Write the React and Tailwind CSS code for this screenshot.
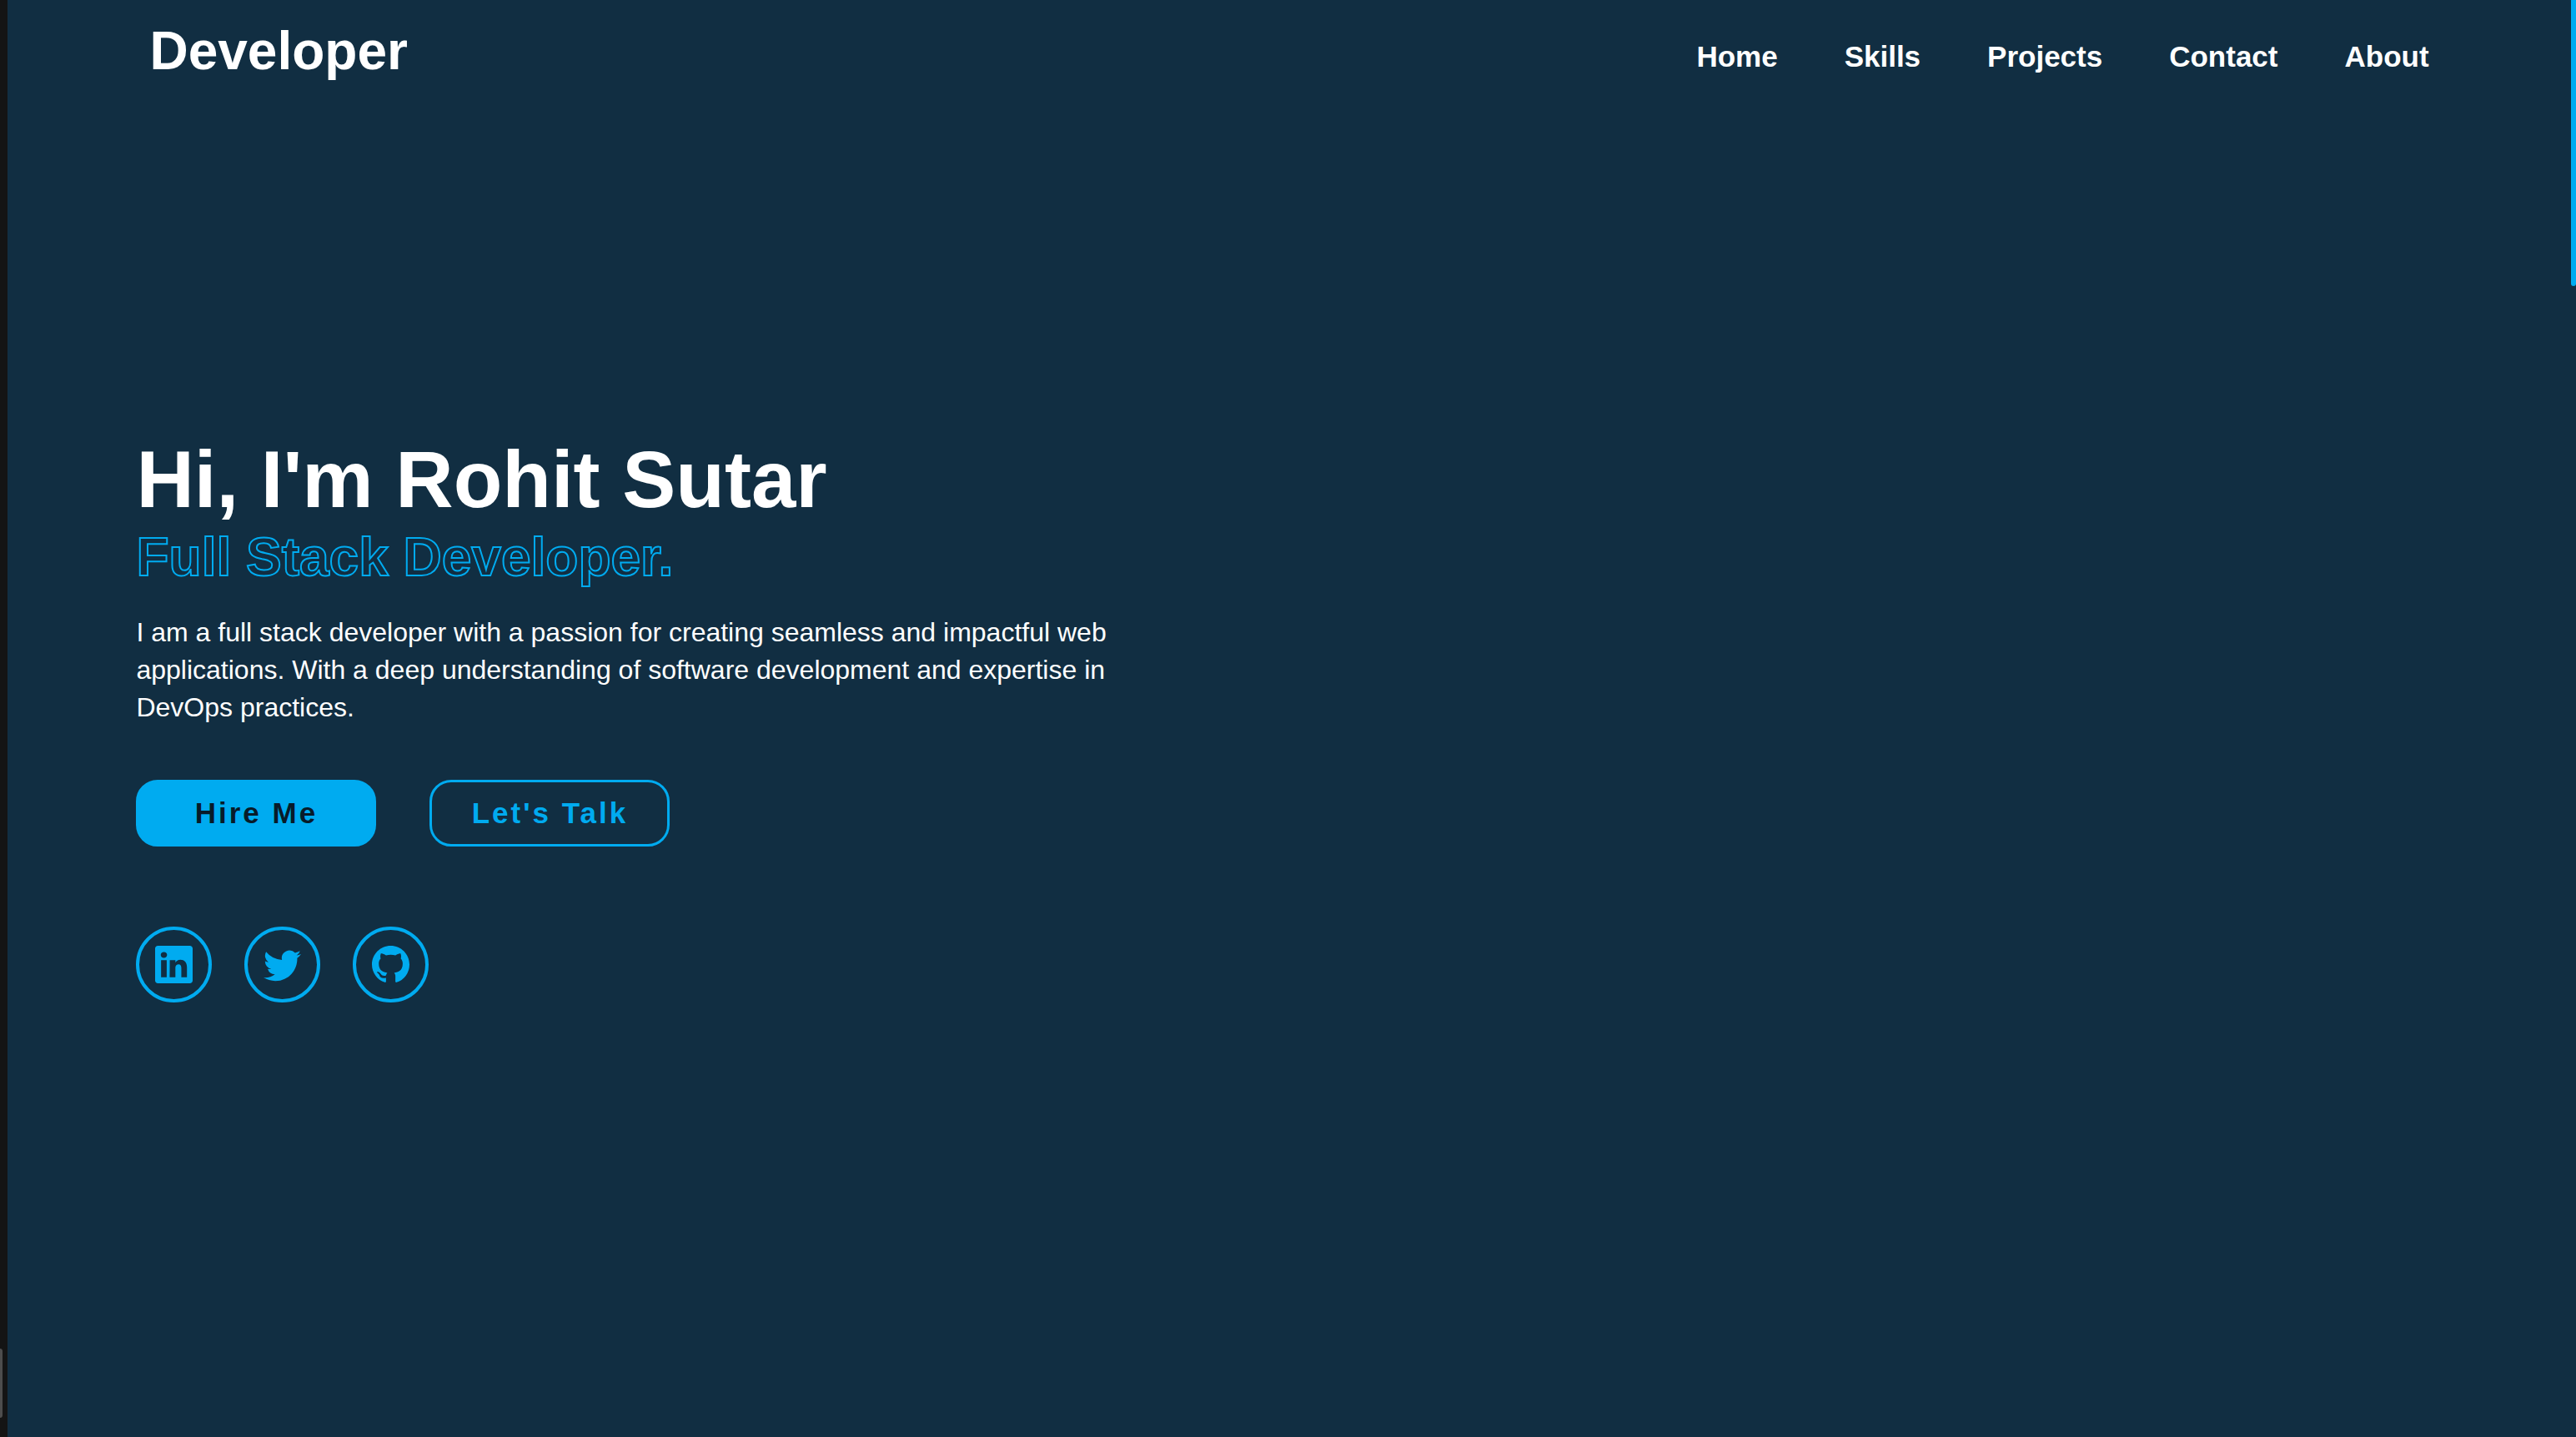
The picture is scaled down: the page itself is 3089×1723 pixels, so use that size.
import { BsGithub, BsLinkedin, BsTwitter } from "react-icons/bs";

const links = ["Home", "Skills", "Projects", "Contact", "About"];

const socials = [
  { name: "LinkedIn", Icon: BsLinkedin },
  { name: "Twitter", Icon: BsTwitter },
  { name: "GitHub", Icon: BsGithub },
];

function Header() {
  return (
    <header className="flex items-start justify-between px-4 py-6 font-bold">
      <a href="#home" className="text-[64px] leading-[74px]">
        Developer
      </a>
      <nav className="flex gap-20 pt-6 text-[35px] leading-10">
        {links.map((link) => (
          <a key={link} href={`#${link.toLowerCase()}`}>
            {link}
          </a>
        ))}
      </nav>
    </header>
  );
}

function Hero() {
  return (
    <section className="flex flex-1 flex-col items-start justify-center pb-[126px]">
      <h1 className="text-[96px] leading-[115px] font-bold">Hi, I'm Rohit Sutar</h1>
      <h2 className="text-[64px] leading-[72px] font-bold text-transparent [-webkit-text-stroke:2px_#00abf0]">
        Full Stack Developer.
      </h2>
      <p className="mt-8 max-w-[1200px] text-[32px] leading-[45px]">
        I am a full stack developer with a passion for creating seamless and impactful web
        applications. With a deep understanding of software development and expertise in DevOps
        practices.
      </p>
      <div className="mt-16 flex gap-16 text-[35px] font-bold tracking-[3px]">
        <button
          type="button"
          className="h-20 w-72 rounded-[26px] border-3 border-[#00abf0] bg-[#00abf0] text-[#081b29]"
        >
          Hire Me
        </button>
        <button
          type="button"
          className="h-20 w-72 rounded-[26px] border-3 border-[#00abf0] text-[#00abf0]"
        >
          Let's Talk
        </button>
      </div>
      <div className="mt-24 flex gap-[39px]">
        {socials.map(({ name, Icon }) => (
          <a
            key={name}
            href={`#${name.toLowerCase()}`}
            aria-label={name}
            className="flex size-[91px] items-center justify-center rounded-full border-4 border-[#00abf0] text-[#00abf0]"
          >
            <Icon className="size-[45px]" />
          </a>
        ))}
      </div>
    </section>
  );
}

export default function App() {
  return (
    <div className="flex min-h-screen bg-[#112e42] font-['Liberation_Sans',Arial,sans-serif] text-white">
      <div className="flex w-[9px] items-end bg-[#141414] pb-[23px]">
        <div className="h-[83px] w-[3px] rounded-r-[3px] bg-[#4d4d4d]" />
      </div>
      <main className="flex flex-1 flex-col px-[5%]">
        <Header />
        <Hero />
      </main>
      <div className="w-[6px]">
        <div className="h-[343px] rounded-b-[3px] bg-[#00abf0]" />
      </div>
    </div>
  );
}
